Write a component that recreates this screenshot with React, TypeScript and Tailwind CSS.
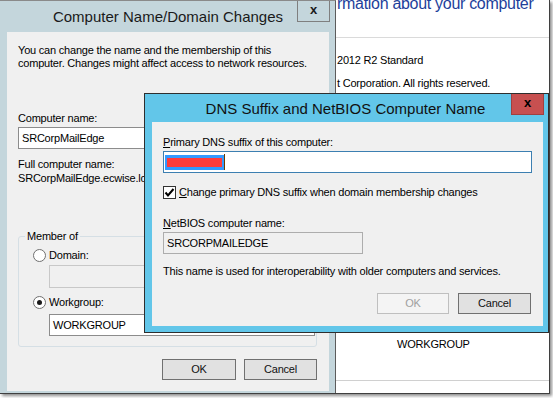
import React from "react";

const F = "font-['Liberation_Sans',Arial,sans-serif]";

function Check() {
  return (
    <div className="w-[13px] h-[13px] border border-[#333] bg-white flex items-center justify-center">
      <svg width="11" height="11" viewBox="0 0 11 11">
        <path d="M1.5 5.5 L4 8.5 L9.5 2" fill="none" stroke="#000" strokeWidth="2" />
      </svg>
    </div>
  );
}

function Radio({ on }: { on?: boolean }) {
  return (
    <div className="w-[13px] h-[13px] rounded-full border border-[#707070] bg-white flex items-center justify-center">
      {on && <div className="w-[5px] h-[5px] rounded-full bg-[#1a1a1a]" />}
    </div>
  );
}

function Btn({ label, disabled, w }: { label: string; disabled?: boolean; w: string }) {
  return (
    <div
      className={
        disabled
          ? `${w} h-[21px] border border-[#bfbfbf] bg-[#f4f4f4] text-[#a0a0a0] flex items-center justify-center`
          : `${w} h-[21px] border border-[#707070] bg-[#e1e1e1] text-[#111] flex items-center justify-center`
      }
    >
      {label}
    </div>
  );
}

export default function App() {
  return (
    <div className={`w-[553px] h-[398px] bg-white relative overflow-hidden ${F} text-[11px] tracking-[-0.2px] leading-[13px] text-black`}>
      <div className="absolute left-0 top-0 w-[550px] h-[394px] bg-white border-r border-b border-[#3f3f3f] shadow-[2px_2px_3px_rgba(0,0,0,0.45)] overflow-hidden">
        {/* background system window */}
        <div className="absolute left-[335px] top-0 right-0 bottom-0 flex flex-col">
          <div className="pl-[2px] mt-[-4px] text-[16px] leading-[16px] tracking-[-0.3px] text-[#1e3f9b] whitespace-nowrap">
            rmation about your computer
          </div>
          <div className="mt-[25px] h-px bg-[#dadada]" />
          <div className="mt-[15px] pl-[2px] leading-[14px]">2012 R2 Standard</div>
          <div className="mt-[9px] pl-[2px] leading-[14px] whitespace-nowrap">t Corporation. All rights reserved.</div>
          <div className="mt-[247px] pl-[62px] leading-[14px]">WORKGROUP</div>
          <div className="mt-[29px] h-px bg-[#d0d0d0]" />
        </div>

        {/* Computer Name/Domain Changes dialog */}
        <div className="absolute left-0 top-0 w-[336px] h-[393px] border-t border-[#8a8a8a] border-r border-r-[#5c5c5c] bg-[#c4d6dc] flex flex-col">
          <div className="h-[31px] flex items-center justify-center text-[15px] tracking-normal text-[#1a1a1a] relative">
            <span className="pl-px">Computer Name/Domain Changes</span>
            <div className="absolute left-[297px] top-0 w-[33px] h-[21px] border border-t-0 border-[#7f7f7f] flex items-center justify-center text-[13px] font-bold leading-none pb-[3px]">
              x
            </div>
          </div>
          <div className="ml-[7px] w-[322px] h-[359px] bg-[#f0f0f0] flex flex-col pl-[11px] pr-[12px] pt-[12px]">
            <div>You can change the name and the membership of this</div>
            <div className="whitespace-nowrap">computer. Changes might affect access to network resources.</div>
            <div className="mt-[42px]">Computer name:</div>
            <div className="mt-[2px] w-[299px] h-[22px] border border-[#8c8c8c] bg-white flex items-center pl-[3px]">SRCorpMailEdge</div>
            <div className="mt-[9px]">Full computer name:</div>
            <div className="mt-[1px] whitespace-nowrap">SRCorpMailEdge.ecwise.local</div>
            <div className="mt-[51px] w-[299px] h-[111px] border border-[#d5dfe5] rounded-[3px] relative flex flex-col pl-[14px] pt-[12px]">
              <span className="absolute -top-[7px] left-[6px] px-[2px] bg-[#f0f0f0]">Member of</span>
              <div className="flex items-center gap-[3px]">
                <Radio />
                <span>Domain:</span>
              </div>
              <div className="mt-[3px] ml-[16px] w-[266px] h-[23px] border border-[#c8c8c8] bg-[#f0f0f0]" />
              <div className="mt-[8px] flex items-center gap-[3px]">
                <Radio on />
                <span>Workgroup:</span>
              </div>
              <div className="mt-[5px] ml-[16px] w-[266px] h-[22px] border border-[#8c8c8c] bg-white flex items-center pl-[3px]">WORKGROUP</div>
            </div>
            <div className="mt-[12px] flex justify-end gap-[8px]">
              <Btn label="OK" w="w-[74px]" />
              <Btn label="Cancel" w="w-[73px]" />
            </div>
          </div>
        </div>

        {/* DNS Suffix dialog */}
        <div className="absolute left-[144px] top-[93px] w-[405px] h-[240px] border border-[#2e2e2e] bg-[#62c6e9] flex flex-col">
          <div className="h-[28px] flex items-center justify-center text-[15px] tracking-normal text-[#111] relative">
            <span className="pr-[2px]">DNS Suffix and NetBIOS Computer Name</span>
            <div className="absolute left-[366px] top-0 w-[33px] h-[21px] bg-[#c75050] border border-t-0 border-[#a04040] flex items-center justify-center text-[13px] font-bold leading-none pb-[3px] text-black">
              x
            </div>
          </div>
          <div className="ml-[7px] w-[391px] h-[204px] bg-[#f0f0f0] flex flex-col pl-[11px] pt-[14px]">
            <div>
              <span className="underline">P</span>rimary DNS suffix of this computer:
            </div>
            <div className="mt-[2px] w-[369px] h-[22px] border border-[#3c7fb1] bg-white flex items-center pl-[1px]">
              <div className="w-[59px] h-[15px] bg-[#3399ff] flex items-center pl-[2px]">
                <div className="w-[55px] h-[9px] bg-[#ff3b3b]" />
              </div>
              <div className="w-px h-[16px] bg-[#6b3a00]" />
            </div>
            <div className="mt-[13px] flex items-center gap-[3px]">
              <Check />
              <span>
                <span className="underline">C</span>hange primary DNS suffix when domain membership changes
              </span>
            </div>
            <div className="mt-[18px]">
              <span className="underline">N</span>etBIOS computer name:
            </div>
            <div className="mt-[2px] w-[200px] h-[22px] border border-[#adadad] bg-[#f0f0f0] flex items-center pl-[3px]">SRCORPMAILEDGE</div>
            <div className="mt-[11px] whitespace-nowrap">This name is used for interoperability with older computers and services.</div>
            <div className="mt-[15px] flex gap-[9px] pl-[214px]">
              <Btn label="OK" disabled w="w-[72px]" />
              <Btn label="Cancel" w="w-[73px]" />
            </div>
          </div>
        </div>
      </div>
    </div>
  );
}
